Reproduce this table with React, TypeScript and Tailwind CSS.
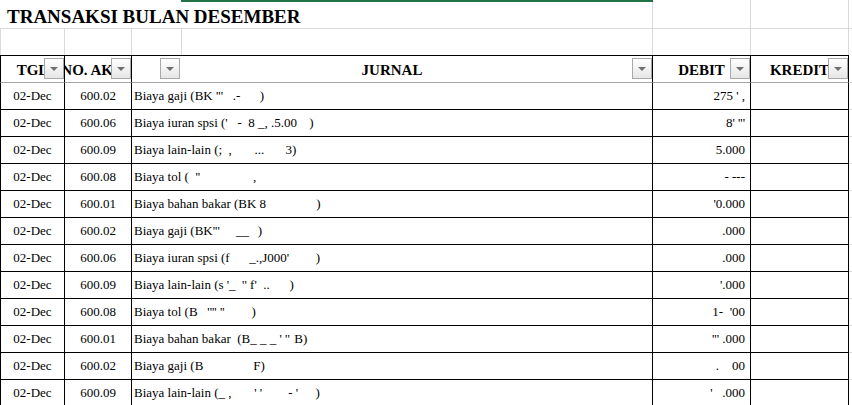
import React from "react";

type Row = { pre: string; mid: string; w: number; post: string; debit: string };

const rows: Row[] = [
  { pre: "Biaya gaji (BK", mid: " '''   .-", w: 47, post: ")", debit: "275 ' ," },
  { pre: "Biaya iuran spsi (", mid: "'   -  8 _, .5.00", w: 84, post: ")", debit: "8' '''" },
  { pre: "Biaya lain-lain (", mid: ";  ,       ...", w: 67, post: "3)", debit: "5.000" },
  { pre: "Biaya tol (", mid: "  ''", w: 64, post: ",", debit: "- ---" },
  { pre: "Biaya bahan bakar (BK 8", mid: "", w: 50, post: ")", debit: "'0.000" },
  { pre: "Biaya gaji (BK", mid: "'''     __", w: 45, post: ")", debit: ".000" },
  { pre: "Biaya iuran spsi (f", mid: "      _.,J000'", w: 86, post: ")", debit: ".000" },
  { pre: "Biaya lain-lain (s", mid: " '_  '' f'  ..", w: 66, post: ")", debit: "'.000" },
  { pre: "Biaya tol (B", mid: "   '''' ''", w: 54, post: ")", debit: "1-  '00" },
  { pre: "Biaya bahan bakar  (B", mid: "_ _ _ ' ''", w: 44, post: "B)", debit: "''' .000" },
  { pre: "Biaya gaji (B", mid: "", w: 50, post: "F)", debit: ".    00" },
  { pre: "Biaya lain-lain (", mid: "_ ,       ' '        - '", w: 97, post: ")", debit: "'   .000" },
];

const accs = ["600.02", "600.06", "600.09", "600.08", "600.01", "600.02", "600.06", "600.09", "600.08", "600.01", "600.02", "600.09"];

function FilterBtn({ className }: { className: string }) {
  return (
    <div
      className={`absolute w-[20px] h-[21px] border border-[#a9a9a9] bg-gradient-to-b from-white to-[#e6e6e6] flex items-center justify-center ${className}`}
    >
      <div className="w-0 h-0 border-l-[4px] border-r-[4px] border-t-[4px] border-l-transparent border-r-transparent border-t-[#707070]" />
    </div>
  );
}

export default function App() {
  return (
    <div className="relative w-[852px] h-[405px] overflow-hidden bg-white text-black [font-family:'Liberation_Serif','Times_New_Roman',serif]">
      {/* title row */}
      <div className="flex h-[29px]">
        <div className="w-[653px] shrink-0 border-b border-r border-[#dadada] flex items-end pl-[7px] pb-[2px] text-[19px] font-bold leading-none whitespace-nowrap">
          TRANSAKSI BULAN DESEMBER
        </div>
        <div className="w-[98px] shrink-0 border-b border-r border-[#dadada]" />
        <div className="w-[98px] shrink-0 border-b border-r border-[#dadada]" />
        <div className="flex-1 border-b border-[#dadada]" />
      </div>
      {/* blank row */}
      <div className="flex h-[26px]">
        <div className="w-[65px] shrink-0 border-l border-r border-[#dadada]" />
        <div className="w-[67px] shrink-0 border-r border-[#dadada]" />
        <div className="w-[50px] shrink-0 border-r border-[#dadada]" />
        <div className="w-[471px] shrink-0 border-r border-[#dadada]" />
        <div className="w-[98px] shrink-0 border-r border-[#dadada]" />
        <div className="w-[98px] shrink-0 border-r border-[#dadada]" />
        <div className="flex-1" />
      </div>
      {/* header row */}
      <div className="flex h-[28px] text-[15px] font-bold">
        <div className="relative w-[65px] shrink-0 border-l border-r border-t border-t-black border-l-black border-r-black border-b border-b-[#a6a6a6] flex items-center justify-center overflow-hidden whitespace-nowrap pt-[2px]">
          <span>TGL</span>
          <FilterBtn className="right-0 top-[2px]" />
        </div>
        <div className="relative w-[67px] shrink-0 border-r border-t border-t-black border-r-black border-b border-b-[#a6a6a6] flex items-center justify-center overflow-hidden whitespace-nowrap pt-[2px]">
          <span>NO. AKUN</span>
          <FilterBtn className="right-0 top-[2px]" />
        </div>
        <div className="relative w-[521px] shrink-0 border-r border-t border-t-black border-r-black border-b border-b-[#a6a6a6] flex items-center justify-center overflow-hidden whitespace-nowrap pt-[2px]">
          <span>JURNAL</span>
          <FilterBtn className="left-[28px] top-[2px]" />
          <FilterBtn className="right-0 top-[2px]" />
        </div>
        <div className="relative w-[98px] shrink-0 border-r border-t border-t-black border-r-black border-b border-b-[#a6a6a6] flex items-center justify-center overflow-hidden whitespace-nowrap pt-[2px]">
          <span>DEBIT</span>
          <FilterBtn className="right-0 top-[2px]" />
        </div>
        <div className="relative w-[98px] shrink-0 border-r border-t border-t-black border-r-black border-b border-b-[#a6a6a6] flex items-center justify-center overflow-hidden whitespace-nowrap pt-[2px]">
          <span>KREDIT</span>
          <FilterBtn className="right-0 top-[2px]" />
        </div>
        <div className="flex-1 border-b border-[#dadada]" />
      </div>
      {/* body rows */}
      {rows.map((r, i) => (
        <div key={i} className="flex h-[27px] text-[13px]">
          <div className="w-[65px] shrink-0 border-l border-r border-b border-black flex items-center justify-center whitespace-nowrap">
            02-Dec
          </div>
          <div className="w-[67px] shrink-0 border-r border-b border-black flex items-center justify-center whitespace-nowrap">
            {accs[i]}
          </div>
          <div className="w-[521px] shrink-0 border-r border-b border-black flex items-center pl-[2px] whitespace-pre">
            <span>{r.pre}</span>
            <span className="inline-block shrink-0" style={{ width: r.w }}>
              {r.mid}
            </span>
            <span>{r.post}</span>
          </div>
          <div className="w-[98px] shrink-0 border-r border-b border-black flex items-center justify-end pr-[5px] whitespace-pre">
            {r.debit}
          </div>
          <div className="w-[98px] shrink-0 border-r border-b border-black" />
          <div className="flex-1 border-b border-[#dadada]" />
        </div>
      ))}
      <div className="absolute top-0 left-[181px] w-[472px] h-[2px] bg-[#217346]" />
    </div>
  );
}
